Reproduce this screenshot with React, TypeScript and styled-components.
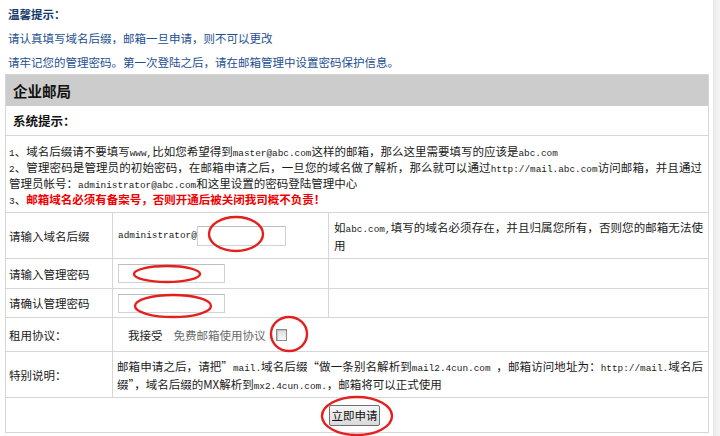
import styled, { createGlobalStyle } from "styled-components";

const GlobalStyle = createGlobalStyle`
  html, body {
    margin: 0;
    padding: 0;
    background: #ffffff;
  }
  body {
    font-family: "Noto Sans CJK SC", "Liberation Sans", sans-serif;
    font-size: 11.5px;
    color: #1a1a1a;
  }
`;

const Page = styled.div`
  position: relative;
  display: flex;
  width: 720px;
  height: 436px;
  overflow: hidden;
`;

const Main = styled.div`
  flex: 1;
  padding-left: 5px;
`;

const ScrollTrack = styled.div`
  width: 6px;
  border-left: 1px solid #e4e4e4;
  background: linear-gradient(to right, #ececec, #f6f6f6);
`;

const Tips = styled.div`
  padding: 2px 0 0 3px;
  height: 72px;
  line-height: 24px;
  color: #1d4f91;
`;

const TipsTitle = styled.div`
  font-weight: bold;
  color: #143a6c;
`;

const Panel = styled.div`
  width: 704px;
  box-sizing: border-box;
  border: 1px solid #d6d6d6;
`;

const PanelHead = styled.div`
  height: 31px;
  display: flex;
  align-items: center;
  padding-left: 7px;
  background: #cccccc;
  font-size: 14.5px;
  font-weight: bold;
  color: #111;
`;

const SubHead = styled.div`
  height: 29px;
  display: flex;
  align-items: center;
  padding-left: 7px;
  border-bottom: 1px solid #d6d6d6;
  font-size: 12.5px;
  font-weight: bold;
  color: #111;
`;

const Notes = styled.div`
  height: 77px;
  box-sizing: border-box;
  padding: 7px 6px 0 3px;
  line-height: 16px;
  text-align: justify;
  border-bottom: 1px solid #d6d6d6;
`;

const Warn = styled.span`
  color: #f00000;
  font-weight: bold;
`;

const Code = styled.span`
  font-family: "Liberation Mono", monospace;
  font-size: 9.4px;
  line-height: 1;
`;

const Form = styled.div`
  display: grid;
  grid-template-columns: 107px 216px 1fr;
  grid-template-rows: 46px 30px 29px 34px 46px 34px;
`;

const Cell = styled.div<{ $span?: number; $last?: boolean; $bottom?: boolean; $pad?: number; $center?: boolean }>`
  grid-column: span ${(p) => p.$span ?? 1};
  display: flex;
  align-items: center;
  justify-content: ${(p) => (p.$center ? "center" : "flex-start")};
  box-sizing: border-box;
  padding-left: ${(p) => p.$pad ?? 3}px;
  padding-right: 5px;
  border-right: ${(p) => (p.$last ? "none" : "1px solid #d6d6d6")};
  border-bottom: ${(p) => (p.$bottom ? "none" : "1px solid #d6d6d6")};
  line-height: 18px;
`;

const CellText = styled.div`
  text-align: justify;
`;

const TextInput = styled.input<{ $w: number; $h: number }>`
  width: ${(p) => p.$w}px;
  height: ${(p) => p.$h}px;
  box-sizing: border-box;
  margin: 0;
  padding: 0 3px;
  border: 1px solid #d2d2d2;
  border-top-color: #bdbdbd;
  background: #fff;
  outline: none;
`;

const Accept = styled.span`
  margin-right: 11px;
  color: #222;
`;

const Terms = styled.span`
  color: #6a6a6a;
  margin-right: 10px;
`;

const Check = styled.input`
  appearance: none;
  margin: 0;
  width: 11px;
  height: 12px;
  border: 1px solid #8a8a8a;
  background: linear-gradient(#dcdcdc, #f7f7f7);
  box-shadow: inset 1px 1px 0 #c4c4c4;
`;

const SubmitButton = styled.button`
  width: 51px;
  height: 21px;
  margin-top: 1px;
  padding: 0;
  border: 1px solid #6f6f6f;
  border-radius: 2px;
  background: linear-gradient(#f7f7f7, #dadada);
  font-family: inherit;
  font-size: 11.5px;
  line-height: 19px;
  color: #111;
`;

const Marks = styled.svg`
  position: absolute;
  left: 0;
  top: 0;
  pointer-events: none;
`;

// red circles marking the fields to fill in
const marks = [
  { cx: 236, cy: 234, rx: 27, ry: 17 },
  { cx: 167, cy: 274, rx: 33, ry: 8 },
  { cx: 173, cy: 306, rx: 38, ry: 11 },
  { cx: 289, cy: 334, rx: 18, ry: 17 },
  { cx: 357, cy: 416, rx: 35, ry: 19 },
];

export default function App() {
  return (
    <>
      <GlobalStyle />
      <Page>
        <Main>
          <Tips>
            <TipsTitle>温馨提示：</TipsTitle>
            <div>请认真填写域名后缀，邮箱一旦申请，则不可以更改</div>
            <div>请牢记您的管理密码。第一次登陆之后，请在邮箱管理中设置密码保护信息。</div>
          </Tips>
          <Panel>
            <PanelHead>企业邮局</PanelHead>
            <SubHead>系统提示：</SubHead>
            <Notes>
              <div>
                <Code>1</Code>、域名后缀请不要填写<Code>www,</Code>比如您希望得到<Code>master@abc.com</Code>
                这样的邮箱，那么这里需要填写的应该是<Code>abc.com</Code>
              </div>
              <div>
                <Code>2</Code>、管理密码是管理员的初始密码，在邮箱申请之后，一旦您的域名做了解析，那么就可以通过
                <Code>http://mail.abc.com</Code>访问邮箱，并且通过管理员帐号：<Code>administrator@abc.com</Code>
                和这里设置的密码登陆管理中心
              </div>
              <div>
                <Code>3</Code>、<Warn>邮箱域名必须有备案号，否则开通后被关闭我司概不负责！</Warn>
              </div>
            </Notes>
            <Form>
              <Cell>请输入域名后缀</Cell>
              <Cell $pad={5}>
                <Code>administrator@</Code>
                <TextInput $w={89} $h={20} />
              </Cell>
              <Cell $last $pad={5}>
                <CellText>
                  如<Code>abc.com,</Code>填写的域名必须存在，并且归属您所有，否则您的邮箱无法使用
                </CellText>
              </Cell>

              <Cell>请输入管理密码</Cell>
              <Cell $pad={5}>
                <TextInput type="password" $w={107} $h={19} />
              </Cell>
              <Cell $last />

              <Cell>请确认管理密码</Cell>
              <Cell $pad={5}>
                <TextInput type="password" $w={107} $h={19} />
              </Cell>
              <Cell $last />

              <Cell>租用协议：</Cell>
              <Cell $span={2} $last $pad={15}>
                <Accept>我接受</Accept>
                <Terms>免费邮箱使用协议</Terms>
                <Check type="checkbox" />
              </Cell>

              <Cell>特别说明：</Cell>
              <Cell $span={2} $last $pad={4}>
                <CellText>
                  邮箱申请之后，请把”<Code>mail.</Code>域名后缀“做一条别名解析到<Code>mail2.4cun.com </Code>
                  ，邮箱访问地址为：<Code>http://mail.</Code>域名后缀”，域名后缀的MX解析到
                  <Code>mx2.4cun.com.</Code>，邮箱将可以正式使用
                </CellText>
              </Cell>

              <Cell $span={3} $last $bottom $center $pad={0}>
                <SubmitButton>立即申请</SubmitButton>
              </Cell>
            </Form>
          </Panel>
        </Main>
        <ScrollTrack />
        <Marks width={720} height={436}>
          {marks.map((m, i) => (
            <ellipse key={i} {...m} fill="none" stroke="#e3201d" strokeWidth={2.4} />
          ))}
        </Marks>
      </Page>
    </>
  );
}
